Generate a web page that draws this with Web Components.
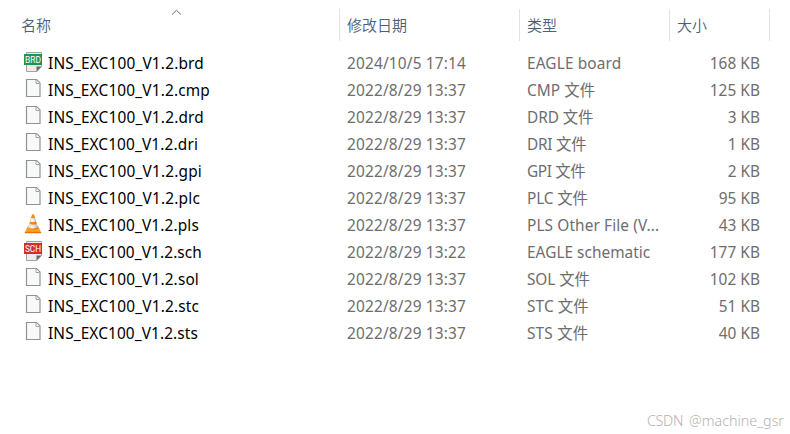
<!DOCTYPE html>
<html lang="zh-CN">
<head>
<meta charset="utf-8">
<title>Files</title>
<style>
html,body{margin:0;background:#fff}
body{width:790px;height:434px;overflow:hidden;font:15.4px/27px "Noto Sans","Noto Sans CJK SC",sans-serif;position:relative}
</style>
</head>
<body>
<file-list></file-list>
<water-mark></water-mark>
<script>
/* Text whose letter spacing is adjusted so that it fills the given width. */
class FitText extends HTMLElement{
  connectedCallback(){
    this.attachShadow({mode:'open'}).innerHTML=`<style>:host{display:inline-block;white-space:pre}span{display:inline-block}</style><span></span>`;
    const s=this.shadowRoot.querySelector('span');
    s.textContent=this.getAttribute('text');
    const w=+this.getAttribute('width');
    if(w) s.style.letterSpacing=((w-s.getBoundingClientRect().width)/s.textContent.length)+'px';
  }
}
customElements.define('fit-text',FitText);

const page=`<path d="M2.500 .5h10l3.500 3.500v13.500h-13.500z" fill="#f8f9f9" stroke="#929292" stroke-width="1.200"/><path d="M12 1v3.500h3.500" fill="#fff" stroke="#a0a0a0"/>`;
const tag=(color,label)=>`<path d="M2.500 .5h15v14l-4.500 5h-10.500z" fill="#ececec" stroke="#a2a2a2"/><path d="M12.500 19.500v-5h5z" fill="#686868"/><rect y="2" width="18" height="11" fill="${color}"/><text x="9" y="10.800" text-anchor="middle" textLength="16" lengthAdjust="spacingAndGlyphs" font-family="Roboto" font-weight="400" font-size="9.500" fill="#fff">${label}</text>`;
const icons={
  page,
  brd:tag('#239251','BRD'),
  sch:tag('#d52b30','SCH'),
  cone:`<defs><linearGradient id="o" x2="1"><stop stop-color="#f59a1d"/><stop offset=".55" stop-color="#f58a12"/><stop offset="1" stop-color="#cf5800"/></linearGradient><linearGradient id="w" x2="1"><stop stop-color="#d4d4d4"/><stop offset=".4" stop-color="#f6f6f6"/><stop offset="1" stop-color="#b8b8b8"/></linearGradient></defs>
  <path d="M3.300 12.800h11.400l2.300 6h-16z" fill="#fba01f"/><path d="M1 17.800h16l.3 1.500H.7z" fill="#e97400"/>
  <path d="M8 .6q1-.7 2 0l4 13.700q-5 3-10 0z" fill="url(#o)"/>
  <path d="M7 4.200h4l1 3.300q-3 1.100-6 0zM5.200 10q3.800 1.500 7.600 0l1.100 3.400q-4.900 2.100-9.800 0z" fill="url(#w)"/>`
};
class FileIcon extends HTMLElement{
  connectedCallback(){
    this.attachShadow({mode:'open'}).innerHTML=`<style>:host{display:block;width:18px;height:21px}svg{display:block;overflow:visible}</style><svg width="18" height="21" viewBox="0 0 18 21">${icons[this.getAttribute('kind')]}</svg>`;
  }
}
customElements.define('file-icon',FileIcon);

class FileRow extends HTMLElement{
  connectedCallback(){
    const [ext,nw,date,type,tw,size,sw,kind]=this.data;
    this.attachShadow({mode:'open'}).innerHTML=`<style>
    :host{display:grid;grid-template-columns:323px 180px 150px 83px;height:27px;padding-left:24px;color:#6d6d6d}
    .name{display:flex;color:#000}file-icon{margin:2px 6px 0 0}
    .size{text-align:right}</style>
    <div class="name"><file-icon kind="${kind}"></file-icon><fit-text text="INS_EXC100_V1.2.${ext}" width="${nw-1}"></fit-text></div>
    <fit-text text="${date}" width="119"></fit-text>
    <fit-text text="${type}" width="${tw-.7}"></fit-text>
    <div class="size"><fit-text text="${size} KB" width="${sw-.7}"></fit-text></div>`;
  }
}
customElements.define('file-row',FileRow);

class ColumnHead extends HTMLElement{
  connectedCallback(){
    this.attachShadow({mode:'open'}).innerHTML=`<style>
    :host{display:block;box-sizing:border-box;height:32px;padding-left:7px;border-right:1px solid #e2e2e2;color:#4c607a;font:15px/32px "Noto Sans CJK SC",sans-serif;font-weight:350;position:relative}
    svg{position:absolute;left:157px;top:0}</style><slot></slot>${this.hasAttribute('sorted')?'<svg width="11" height="7"><path d="M1 5.500l4.500-4.200L10 5.500" fill="none" stroke="#666"/></svg>':''}`;
  }
}
customElements.define('column-head',ColumnHead);

class FileList extends HTMLElement{
  connectedCallback(){
    this.attachShadow({mode:'open'}).innerHTML=`<style>
    :host{display:block;padding-top:9px}
    header{display:grid;grid-template-columns:326px 180px 150px 100px;padding-left:14px;margin-bottom:9px}
    </style><header><column-head sorted>名称</column-head><column-head>修改日期</column-head><column-head>类型</column-head><column-head>大小</column-head></header>`;
    [['brd',157,'2024/10/5 17:14','EAGLE board',95,168,51,'brd'],
     ['cmp',163,'','CMP 文件',69,125,51],
     ['drd',157,'','DRD 文件',67,3,33],
     ['dri',151,'','DRI 文件',60,1,33],
     ['gpi',155,'','GPI 文件',59,2,33],
     ['plc',153,'','PLC 文件',61.500,95,42],
     ['pls',152,'','PLS Other File (V...',133,43,42,'cone'],
     ['sch',155,'2022/8/29 13:22','EAGLE schematic',124,177,51,'sch'],
     ['sol',152,'','SOL 文件',63.500,102,51],
     ['stc',152,'','STC 文件',62.500,51,42],
     ['sts',151,'','STS 文件',62,40,42]].forEach(d=>{
      d[2]=d[2]||'2022/8/29 13:37';d[7]=d[7]||'page';
      const r=document.createElement('file-row');r.data=d;this.shadowRoot.append(r);
    });
  }
}
customElements.define('file-list',FileList);

class WaterMark extends HTMLElement{
  connectedCallback(){
    this.attachShadow({mode:'open'}).innerHTML=`<style>:host{position:absolute;left:647px;top:411px;color:#b3b3b3;font:14.300px/20px "Noto Sans",sans-serif;font-weight:300}div{display:flex;justify-content:space-between;width:137px}</style>
    <div><fit-text text="CSDN" width="36"></fit-text><fit-text text="@machine_gsr" width="95"></fit-text></div>`;
  }
}
customElements.define('water-mark',WaterMark);
</script>
</body>
</html>
